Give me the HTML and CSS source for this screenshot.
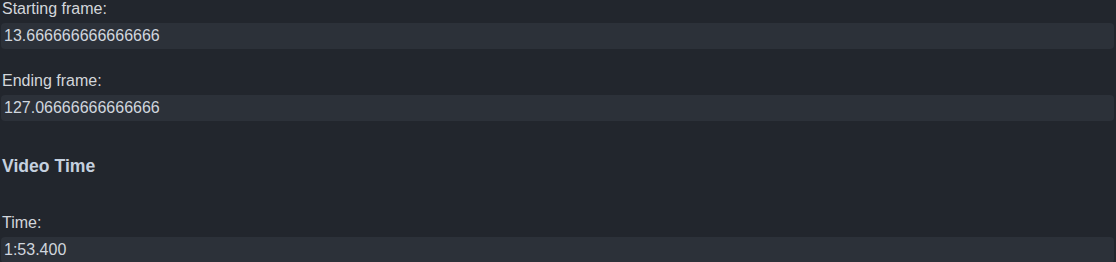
FILE: index.html
```html
<!DOCTYPE html>
<html lang="en">
<head>
<meta charset="utf-8">
<title>Video Time</title>
<link rel="stylesheet" href="styles.css">
</head>
<body>
<div class="panel">
  <div class="field">
    <label class="lbl">Starting frame:</label>
    <div class="value">13.666666666666666</div>
  </div>
  <div class="field">
    <label class="lbl">Ending frame:</label>
    <div class="value">127.06666666666666</div>
  </div>
  <h3 class="section">Video Time</h3>
  <div class="field field-after-heading">
    <label class="lbl">Time:</label>
    <div class="value">1:53.400</div>
  </div>
</div>
</body>
</html>
```
FILE: styles.css
```css
html, body {
  margin: 0;
  padding: 0;
  background: #22262d;
}
body {
  font-family: "Liberation Sans", Arial, sans-serif;
  font-size: 16px;
  color: #d3d6db;
}
.panel {
  display: flex;
  flex-direction: column;
  padding: 0 2px 0 1px;
}
.field {
  display: flex;
  flex-direction: column;
}
.field + .field {
  margin-top: 23px;
}
.lbl {
  display: block;
  line-height: 18px;
  padding-left: 1px;
  margin-bottom: 5px;
  color: #d3d6db;
}
.value {
  height: 26px;
  line-height: 26px;
  padding: 0 3px;
  border-radius: 4px;
  background: #2c3139;
  color: #d0d6de;
  white-space: nowrap;
}
.section {
  margin: 35px 0 0 0;
  padding-left: 1px;
  font-size: 17.6px;
  line-height: 20px;
  font-weight: bold;
  color: #c5d0df;
}
.field-after-heading {
  margin-top: 38px;
}
```
